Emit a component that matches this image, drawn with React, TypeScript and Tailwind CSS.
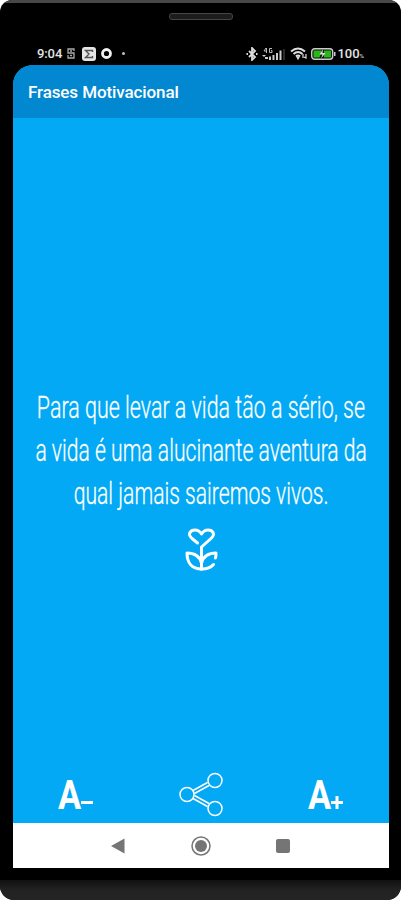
import React from "react";

const quote = [
  { text: "Para que levar a vida tão a sério, se", scale: "scale-x-[0.67]" },
  { text: "a vida é uma alucinante aventura da", scale: "scale-x-[0.66]" },
  { text: "qual jamais sairemos vivos.", scale: "scale-x-[0.66]" },
];

const StatusBar = () => {
  return (
    <div className="flex h-[15px] items-center justify-between pr-[37px] pl-[37px] text-[#e4e4e4]">
      <div className="flex items-center">
        <span className="w-[27px] text-[13px] leading-[15px] font-medium tracking-[-0.1px] whitespace-nowrap">
          9:04
        </span>
        <svg className="ml-[3px]" width="8" height="11" viewBox="0 0 8 11" fill="none" stroke="#aaa" strokeWidth="1.300">
          <path d="M7 3V1H1v4h6v5H1V7M3 3h2M3 7.500h2" />
        </svg>
        <svg className="ml-[7px]" width="14" height="14" viewBox="0 0 14 14">
          <rect width="14" height="14" rx="3" fill="#e6e6e6" />
          <path d="M10.500 5V3.500h-7L7 7l-3.500 3.500h7V9" fill="none" stroke="#555" strokeWidth="1.400" />
        </svg>
        <svg className="ml-[5px]" width="11" height="11" viewBox="0 0 11 11">
          <circle cx="5.500" cy="5.500" r="4" fill="none" stroke="#f0f0f0" strokeWidth="2.800" />
        </svg>
        <span className="ml-[10px] h-[3px] w-[3px] rounded-full bg-[#bbb]" />
      </div>
      <div className="flex items-center">
        <svg className="-mr-px" width="12" height="14" viewBox="0 0 12 14" fill="none" stroke="#ddd" strokeWidth="1.800">
          <path d="M3 4l6 6-3 3V1l3 3-6 6" />
          <path d="M.5 7h1.500M10 7h1.500" strokeWidth="2" />
        </svg>
        <svg className="ml-[5px]" width="23" height="14" viewBox="0 0 23 14" fill="#ccc">
          <path d="M4 1L2 4h3M4.500 1v5M10 1.500H7.500v4H10V3.500H9" fill="none" stroke="#bbb" strokeWidth="1" />
          <path d="M0 8h4l-2 2zM3 10h3v2H3zM7 9.500h2V13H7zM10.500 8h2v5h-2zM14 6h2v7h-2zM17.500 3.500h2V13h-2z" />
          <path d="M21.500 2h1v11h-1z" fill="#555" />
        </svg>
        <svg className="ml-[5px]" width="18" height="13" viewBox="0 0 18 13" fill="none" stroke="#ddd" strokeWidth="2">
          <path d="M1 4.500q7-6 14 0M3.500 7q4.500-4 9 0M6 9.500q2-2 4 0" />
          <path d="M7 10l1 2 1-2zM13 7v4M16 7v4l-2-1" strokeWidth="1.200" />
        </svg>
        <svg className="ml-[3px]" width="25" height="12" viewBox="0 0 25 12">
          <rect x=".7" y=".7" width="21" height="10.600" rx="3" fill="#111" stroke="#ccc" strokeWidth="1.400" />
          <path d="M2.500 2.500H11L8.500 9.500h-6zM13 2.500h7v7h-7z" fill="#26b818" />
          <path d="M12 1.500L8.500 6.500h3L10 10.500l4.500-5.500h-3z" fill="#ddd" />
          <path d="M23 4h1.500v4H23z" fill="#ccc" />
        </svg>
        <span className="ml-px text-[13px] leading-[15px] font-medium">100</span>
        <span className="mt-[4px] text-[6px] leading-[6px]">%</span>
      </div>
    </div>
  );
};

const FlowerIcon = () => {
  return (
    <svg width="33" height="43" viewBox="0 0 33 43" fill="none" stroke="#fff" strokeWidth="3" strokeLinecap="round" strokeLinejoin="round">
      <path d="M12.500 15L7 10.500C2 6 5.500 2 10 2c3 0 5 1.500 6.500 4C18 3.500 20 2 23 2c4.500 0 8 4 3 8.500L16.500 19v22" />
      <path d="M16.500 41C7 41 2 35 2 25c7.500 0 12.500 3 14.500 10" />
      <path d="M16.500 35c2-7 7-10 14.500-10 0 2 0 3-.5 5M28.500 36.500c-3 3.500-7 4.500-12 4.500" />
    </svg>
  );
};

const ShareIcon = () => {
  return (
    <svg width="44" height="46" viewBox="0 0 44 46" fill="none" stroke="#fff" strokeWidth="1.500">
      <path d="M14 19.500L28.500 11.500M15.500 22.500L30 14.500M15.500 24.500L30 32.500M14 27.500L28.500 35.500" />
      <circle cx="8" cy="23.500" r="7" />
      <circle cx="36" cy="9.500" r="7" />
      <circle cx="36" cy="37.500" r="7" />
    </svg>
  );
};

const App = () => {
  return (
    <div className="h-[900px] w-[401px] bg-white font-[Roboto,sans-serif]">
      <div className="flex h-full w-full flex-col overflow-hidden rounded-t-[12px] rounded-b-[14px] bg-black">
        <div className="h-[3px] shrink-0 bg-[#484848]" />
        <div className="flex h-[43px] shrink-0 justify-center pt-[10px]">
          <div className="h-[7px] w-[64px] rounded-[3px] border border-[#454545] bg-[#1c1c1c]" />
        </div>
        <StatusBar />

        <div className="mt-[4px] mr-[12px] ml-[13px] flex h-[803px] shrink-0 flex-col overflow-hidden rounded-t-[20px] bg-[#03a9f4]">
          <header className="flex h-[53px] shrink-0 items-center bg-[#0288d1] pl-[15px]">
            <h1 className="text-[17px] leading-5 font-medium tracking-[-0.1px] text-white">
              Frases Motivacional
            </h1>
          </header>

          <main className="flex flex-1 flex-col items-center pt-[268px]">
            {quote.map((line) => (
              <p
                key={line.text}
                className={`h-[43px] text-[32px] leading-[43px] font-light whitespace-nowrap text-white [-webkit-text-stroke:0.3px_white] ${line.scale}`}
              >
                {line.text}
              </p>
            ))}
            <div className="mt-[13px]">
              <FlowerIcon />
            </div>
          </main>

          <div className="flex h-[52px] shrink-0 items-start justify-between px-[45px] text-white">
            <button className="flex w-[36px] items-end pt-[2px]">
              <span className="w-[23px] origin-left scale-x-[0.86] text-[40px] leading-[46px] font-bold">A</span>
              <span className="mb-[15px] h-[3px] w-[12px] shrink-0 bg-white" />
            </button>
            <ShareIcon />
            <button className="flex w-[36px] items-end pt-[2px]">
              <span className="w-[22px] origin-left scale-x-[0.86] text-[40px] leading-[46px] font-bold">A</span>
              <svg className="mb-[10px] ml-px shrink-0" width="12" height="13" viewBox="0 0 12 13" stroke="#fff" strokeWidth="3">
                <path d="M6 0v13M0 6.500h12" />
              </svg>
            </button>
          </div>

          <nav className="flex h-[45px] shrink-0 items-center justify-between bg-white pr-[99px] pl-[98px]">
            <svg width="14" height="16" viewBox="0 0 14 16">
              <path d="M0 8L13.500.5v15z" fill="#757575" />
            </svg>
            <svg width="20" height="20" viewBox="0 0 20 20">
              <circle cx="10" cy="10" r="9" fill="none" stroke="#757575" strokeWidth="1.500" />
              <circle cx="10" cy="10" r="6" fill="#757575" />
            </svg>
            <div className="h-[14px] w-[14px] rounded-[2px] bg-[#757575]" />
          </nav>
        </div>

        <div className="mt-[12px] h-[20px] shrink-0 bg-linear-to-b from-[#111] via-[#222] to-[#242424]" />
      </div>
    </div>
  );
};

export default App;
